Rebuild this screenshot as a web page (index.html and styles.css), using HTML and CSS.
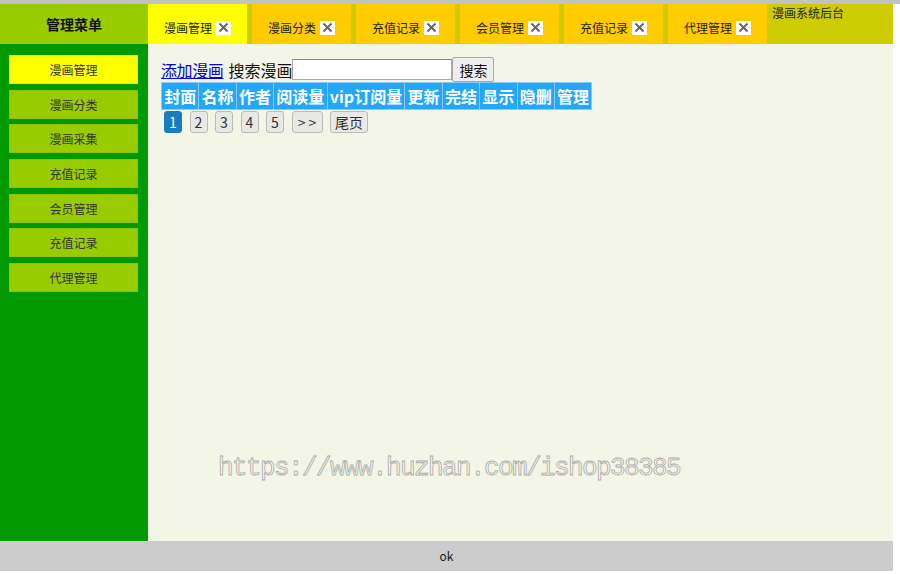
FILE: index.html
```html
<!DOCTYPE html>
<html lang="zh-CN">
<head>
  <meta charset="UTF-8">
  <title>漫画系统后台</title>
  <link rel="stylesheet" href="styles.css">
</head>
<body>
  <div class="frame">
    <div class="topbar">
      <div class="brand">管理菜单</div>
      <div class="tabs">
        <div class="tab on">漫画管理 <span class="close"><svg width="11" height="11" viewBox="0 0 11 11"><path d="M1.5 1.5 L9.5 9.5 M9.5 1.5 L1.5 9.5" stroke="#666" stroke-width="2"/></svg></span></div>
        <div class="tab">漫画分类 <span class="close"><svg width="11" height="11" viewBox="0 0 11 11"><path d="M1.5 1.5 L9.5 9.5 M9.5 1.5 L1.5 9.5" stroke="#666" stroke-width="2"/></svg></span></div>
        <div class="tab">充值记录 <span class="close"><svg width="11" height="11" viewBox="0 0 11 11"><path d="M1.5 1.5 L9.5 9.5 M9.5 1.5 L1.5 9.5" stroke="#666" stroke-width="2"/></svg></span></div>
        <div class="tab">会员管理 <span class="close"><svg width="11" height="11" viewBox="0 0 11 11"><path d="M1.5 1.5 L9.5 9.5 M9.5 1.5 L1.5 9.5" stroke="#666" stroke-width="2"/></svg></span></div>
        <div class="tab">充值记录 <span class="close"><svg width="11" height="11" viewBox="0 0 11 11"><path d="M1.5 1.5 L9.5 9.5 M9.5 1.5 L1.5 9.5" stroke="#666" stroke-width="2"/></svg></span></div>
        <div class="tab">代理管理 <span class="close"><svg width="11" height="11" viewBox="0 0 11 11"><path d="M1.5 1.5 L9.5 9.5 M9.5 1.5 L1.5 9.5" stroke="#666" stroke-width="2"/></svg></span></div>
      </div>
      <div class="sitename">漫画系统后台</div>
    </div>

    <div class="main">
      <div class="side">
        <a class="menu on">漫画管理</a>
        <a class="menu">漫画分类</a>
        <a class="menu">漫画采集</a>
        <a class="menu">充值记录</a>
        <a class="menu">会员管理</a>
        <a class="menu">充值记录</a>
        <a class="menu">代理管理</a>
      </div>

      <div class="content">
        <div class="search">
          <a href="#" class="add">添加漫画</a>
          <span class="label">搜索漫画</span><input type="text" class="kw"><button class="btn">搜索</button>
        </div>
        <table class="list">
          <tr>
            <th>封面</th><th>名称</th><th>作者</th><th>阅读量</th><th>vip订阅量</th>
            <th>更新</th><th>完结</th><th>显示</th><th>隐删</th><th>管理</th>
          </tr>
        </table>
        <div class="pager">
          <span class="pg cur">1</span>
          <span class="pg">2</span>
          <span class="pg">3</span>
          <span class="pg">4</span>
          <span class="pg">5</span>
          <span class="pg next">&gt; &gt;</span>
          <span class="pg">尾页</span>
        </div>
      </div>
    </div>

    <div class="footer">ok</div>
  </div>
  <div class="mark">https://www.huzhan.com/ishop38385</div>
</body>
</html>
```

FILE: styles.css
```css
body {
  margin: 0;
  border-top: 4px solid #c2c2c2;
  font-family: "Noto Sans CJK SC", "Noto Sans", sans-serif;
  color: #222;
  position: relative;
}

.frame {
  width: 893px;
}

/* top bar */
.topbar {
  display: flex;
  height: 40px;
  background: #cccc00;
}

.brand {
  width: 148px;
  background: #99cc00;
  display: flex;
  align-items: center;
  justify-content: center;
  font-size: 14px;
  font-weight: bold;
  color: #111;
}

.tabs {
  display: flex;
  gap: 5px;
}

.tab {
  width: 99px;
  background: #ffcc00;
  display: flex;
  align-items: center;
  justify-content: center;
  gap: 4px;
  font-size: 12px;
  line-height: 16px;
  padding-top: 7px;
  box-sizing: border-box;
}

.tab.on {
  background: #ffff00;
}

.close {
  width: 15px;
  height: 14px;
  background: #fff;
  display: flex;
  align-items: center;
  justify-content: center;
}

.sitename {
  flex: 1;
  font-size: 12px;
  line-height: 16px;
  padding: 1px 0 0 5px;
}

/* body */
.main {
  display: flex;
  height: 497px;
}

.side {
  width: 148px;
  background: #009900;
  padding: 11px 10px 0 9px;
  box-sizing: border-box;
  display: flex;
  flex-direction: column;
  gap: 5.7px;
}

.menu {
  height: 29px;
  flex-shrink: 0;
  background: #99cc00;
  border: 1px solid #8dc400;
  box-sizing: border-box;
  display: flex;
  align-items: center;
  justify-content: center;
  font-size: 12px;
  color: #333;
}

.menu.on {
  background: #ffff00;
  border-color: #eeee00;
}

.content {
  flex: 1;
  background: #f3f5e6;
  padding: 13px 0 0 13px;
}

.search {
  display: flex;
  align-items: center;
  height: 25px;
  font-size: 16px;
  line-height: 20px;
}

.add {
  color: #0000ee;
  margin-right: 5px;
  letter-spacing: -0.4px;
}

.label {
  color: #111;
}

.kw {
  width: 160px;
  height: 21px;
  box-sizing: border-box;
  border: 1px solid #aaa;
  border-top-color: #888;
  background: #fff;
  margin: 0;
}

.btn {
  width: 42px;
  height: 25px;
  margin: 0;
  padding: 0;
  font-family: inherit;
  font-size: 14px;
  background: #eeeeee;
  border: 1px solid #a8a8a8;
  border-radius: 2px;
  color: #111;
}

.list {
  border-collapse: collapse;
}

.list th {
  background: #22a7fb;
  color: #fff;
  font-size: 16px;
  line-height: 20px;
  height: 27px;
  padding: 0 2.2px;
  border: 1px solid #8fc9ee;
  box-sizing: border-box;
  white-space: nowrap;
}

.pager {
  display: flex;
  gap: 7.5px;
  margin: 1px 0 0 3px;
}

.pg {
  min-width: 18px;
  height: 22px;
  line-height: 20px;
  padding: 0 4px;
  box-sizing: border-box;
  border: 1px solid #bbb;
  border-radius: 3px;
  background: #e8e8e4;
  font-size: 14px;
  text-align: center;
  white-space: nowrap;
  color: #333;
}

.pg.next {
  width: 31px;
  padding: 0;
}

.pg.cur {
  background: #1b7bbf;
  border-color: #1b7bbf;
  color: #fff;
}

.footer {
  height: 30px;
  line-height: 30px;
  background: #cccccc;
  text-align: center;
  font-size: 12px;
  color: #222;
}

/* watermark over the page */
.mark {
  position: absolute;
  left: 218px;
  top: 449px;
  font-family: "Liberation Mono", monospace;
  font-size: 26px;
  letter-spacing: -1.6px;
  color: #f3f5e6;
  -webkit-text-stroke: 0.8px #acacac;
  pointer-events: none;
}
```
